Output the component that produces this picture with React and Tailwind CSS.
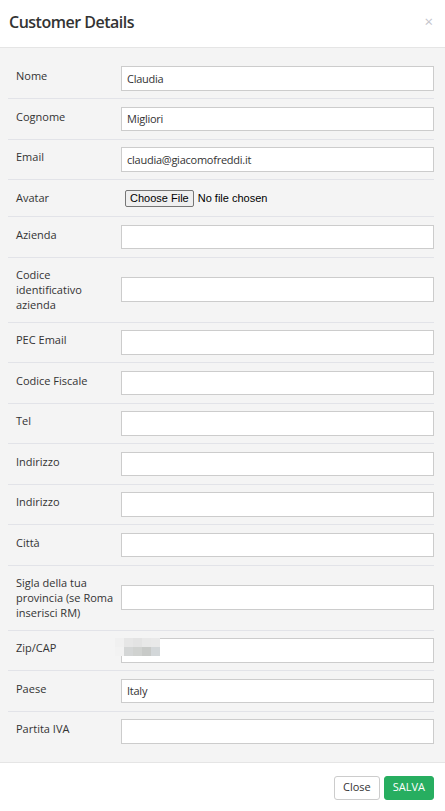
import { useState } from 'react'

const fields = [
  { label: 'Nome', value: 'Claudia' },
  { label: 'Cognome', value: 'Migliori' },
  { label: 'Email', value: 'claudia@giacomofreddi.it' },
  { label: 'Avatar', type: 'file' },
  { label: 'Azienda', value: '' },
  { label: 'Codice identificativo azienda', value: '' },
  { label: 'PEC Email', value: '' },
  { label: 'Codice Fiscale', value: '' },
  { label: 'Tel', value: '' },
  { label: 'Indirizzo', value: '' },
  { label: 'Indirizzo', value: '' },
  { label: 'Città', value: '' },
  { label: 'Sigla della tua provincia (se Roma inserisci RM)', value: '' },
  { label: 'Zip/CAP', value: '', blurred: true },
  { label: 'Paese', value: 'Italy' },
  { label: 'Partita IVA', value: '' },
]

// pixelated redaction over the zip value
const blurTop = ['#f0f0f0', '#e6e6e6', '#e3e3e3', '#e8e8e8', '#e9e9e9']
const blurBottom = ['#f2f2f2', '#d4d6d6', '#d0d2d0', '#c8cac8', '#d3d7d9']

function Redacted() {
  return (
    <div className="absolute left-[-6px] top-[0px] grid grid-cols-5 pointer-events-none">
      {blurTop.map((c, i) => (
        <div key={'t' + i} className="w-[9px] h-[9px]" style={{ background: c }} />
      ))}
      {blurBottom.map((c, i) => (
        <div key={'b' + i} className="w-[9px] h-[9px]" style={{ background: c }} />
      ))}
    </div>
  )
}

function FieldRow({ field, last }) {
  const [value, setValue] = useState(field.value || '')
  return (
    <div className={`flex items-center pl-[8px] py-[7.5px] ${last ? '' : 'border-b border-[#e2e3e8]'}`}>
      <label className="w-[105px] shrink-0 pr-[6px] pt-[2px] pb-[2px] self-start text-[11px] leading-[15px] font-medium text-[#333]">
        {field.label}
      </label>
      {field.type === 'file' ? (
        <div className="flex items-center h-[21px] gap-[4px] font-['Liberation_Sans',Arial,sans-serif] text-[11px] text-black">
          <button className="h-[17px] px-[4px] ml-[4px] bg-[#efefef] border border-[#767676] rounded-[2px] leading-none">
            Choose File
          </button>
          <span>No file chosen</span>
        </div>
      ) : (
        <div className="relative flex-1">
          <input
            value={value}
            onChange={(e) => setValue(e.target.value)}
            className="block w-full h-[24.5px] bg-white border border-[#cccccc] px-[5px] text-[11px] tracking-[-0.25px] text-[#333] outline-none"
          />
          {field.blurred && <Redacted />}
        </div>
      )}
    </div>
  )
}

export default function App() {
  return (
    <div className="w-[445px] min-h-[811px] bg-white font-['Open_Sans',sans-serif]">
      <div className="flex items-center justify-between h-[48px] pl-[9px] pr-[12px] pb-[4px] border-b border-[#e5e5e5]">
        <h4 className="text-[16px] tracking-[-0.5px] font-semibold text-[#333]">Customer Details</h4>
        <button className="text-[15px] leading-none text-[#c4c4cc]">×</button>
      </div>

      <div className="bg-[#f4f4f4] pt-[10.5px] pb-[10.5px] pl-[8px] pr-[11px]">
        {fields.map((f, i) => (
          <FieldRow key={i} field={f} last={i === fields.length - 1} />
        ))}
      </div>

      <div className="flex justify-end gap-[4px] pt-[13px] pr-[11px] border-t border-[#e5e5e5]">
        <button className="h-[24px] px-[8px] bg-white border border-[#cccccc] rounded-[3px] text-[11px] text-[#333]">
          Close
        </button>
        <button className="h-[24px] px-[8px] bg-[#27ae60] border border-[#27ae60] rounded-[3px] text-[11px] text-white">
          SALVA
        </button>
      </div>
    </div>
  )
}
